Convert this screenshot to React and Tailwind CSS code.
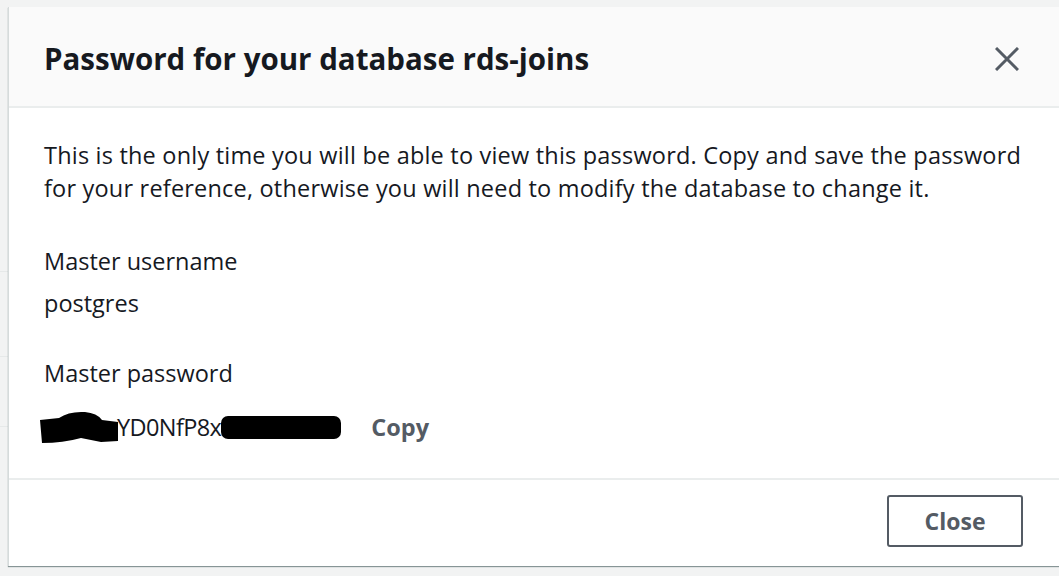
export default function App() {
  return (
    <div className="w-[1059px] h-[576px] overflow-hidden bg-[#f2f3f3] flex font-['Open_Sans',sans-serif] text-[#16191f]">
      {/* Page behind the overlay */}
      <div className="w-2 shrink-0 flex flex-col">
        <div className="h-[272px] border-b border-[#e6e9e9]" />
        <div className="h-[85px] border-b border-[#e6e9e9]" />
        <div className="h-[70px] border-b border-[#e6e9e9]" />
      </div>

      {/* Modal */}
      <div className="pt-[7px] shrink-0">
        <div className="w-[1060px] h-[559px] bg-white border-l border-[#d5dbdb] shadow-[0_1px_1px_0_#879596] flex flex-col">
          {/* Header */}
          <div className="h-[101px] shrink-0 bg-[#fafafa] border-b-2 border-[#eaeded] flex items-center justify-between pl-[35px] pr-[49px]">
            <h1 className="text-[29.5px] font-bold leading-none pt-[4px]">Password for your database rds-joins</h1>
            <button className="text-[#545b64] pt-[4px]">
              <svg width="24" height="24" viewBox="0 0 24 24">
                <path d="M1 1 L23 23 M23 1 L1 23" stroke="currentColor" strokeWidth="3" />
              </svg>
            </button>
          </div>

          {/* Body */}
          <div className="flex-1 pl-[35px] pt-[31px] text-[23.5px] leading-[33px]">
            <p className="w-[1000px] tracking-[0.2px]">
              This is the only time you will be able to view this password. Copy and save the password for your
              reference, otherwise you will need to modify the database to change it.
            </p>
            <div className="mt-[40px]">Master username</div>
            <div className="mt-[9px]">postgres</div>
            <div className="mt-[37px]">Master password</div>
            <div className="mt-[21px] flex items-center h-[33px]">
              <Blob />
              <span className="-ml-[2px] tracking-[-0.6px]">YD0NfP8x</span>
              <span className="w-[120px] h-[23px] bg-black rounded-[7px]" />
              <span className="ml-[30px] font-bold text-[#545b64]">Copy</span>
            </div>
          </div>

          {/* Footer */}
          <div className="h-[88px] shrink-0 border-t-2 border-[#eaeded] flex items-start justify-end pt-[15px] pr-[45px]">
            <button className="w-[136px] h-[52px] border-2 border-[#545b64] rounded-[3px] text-[23px] font-bold text-[#545b64]">
              Close
            </button>
          </div>
        </div>
      </div>
    </div>
  );
}

function Blob() {
  return (
    <svg width="80" height="33" viewBox="0 0 80 33" className="-ml-[5px]">
      <path d="M1 9 L20 7 Q30 0 46 1 Q58 2 63 9 L79 11 L79 30 L62 31 L42 27 Q24 32 3 32 Z" fill="#000" />
    </svg>
  );
}
